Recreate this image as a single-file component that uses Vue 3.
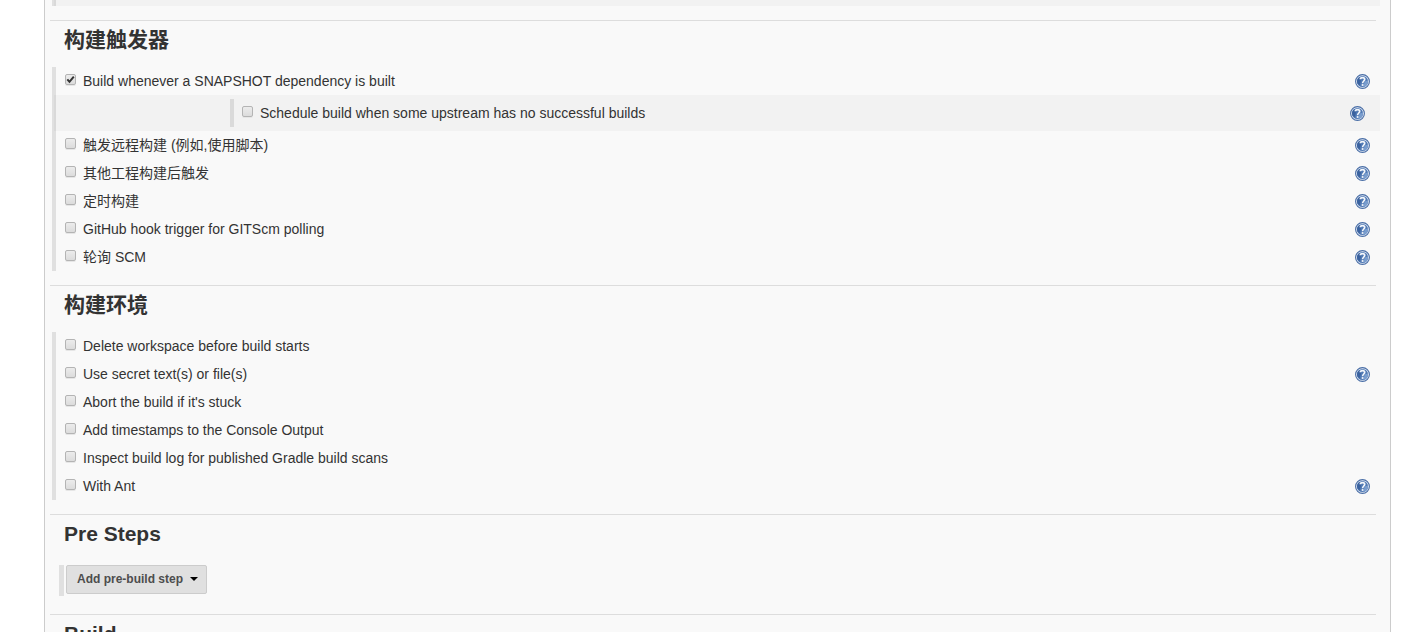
<script setup>
const sections = [
  {
    id: 'triggers',
    title: '构建触发器',
    rows: [
      { label: 'Build whenever a SNAPSHOT dependency is built', checked: true, help: true },
      { label: 'Schedule build when some upstream has no successful builds', nested: true, help: true },
      { label: '触发远程构建 (例如,使用脚本)', help: true },
      { label: '其他工程构建后触发', help: true },
      { label: '定时构建', help: true },
      { label: 'GitHub hook trigger for GITScm polling', help: true },
      { label: '轮询 SCM', help: true }
    ]
  },
  {
    id: 'environment',
    title: '构建环境',
    rows: [
      { label: 'Delete workspace before build starts' },
      { label: 'Use secret text(s) or file(s)', help: true },
      { label: "Abort the build if it's stuck" },
      { label: 'Add timestamps to the Console Output' },
      { label: 'Inspect build log for published Gradle build scans' },
      { label: 'With Ant', help: true }
    ]
  }
]
</script>

<template>
  <main class="page">
    <form class="panel" @submit.prevent>
      <div class="options previous"><div class="nested-tail"></div></div>

      <section v-for="section in sections" :key="section.id" class="section">
        <h2 class="title">{{ section.title }}</h2>
        <div class="options">
          <div
            v-for="(row, i) in section.rows"
            :key="i"
            class="row"
            :class="{ nested: row.nested }"
          >
            <div class="choice">
              <input :id="section.id + i" class="box" type="checkbox" :checked="row.checked" />
              <label :for="section.id + i">{{ row.label }}</label>
            </div>
            <a v-if="row.help" class="help" href="#" :aria-label="'Help: ' + row.label">
              <svg viewBox="0 0 16 16" width="16" height="16" aria-hidden="true">
                <circle cx="7.5" cy="8.5" r="6.9" fill="#e4ebf5" stroke="#4a6ea6" stroke-width="1.1" />
                <circle cx="7.5" cy="8.5" r="5.5" fill="#5079b4" />
                <path d="M2.5 10.5A5.5 5.5 0 0 1 4.5 3.9L6 7.5 4.5 12.5Z" fill="#3a629f" />
                <path d="M8.5 13.9A5.5 5.5 0 0 0 13 7.5L9.5 8.5Z" fill="#799dce" />
                <path
                  d="M5.3 6.3C5.3 4 9.7 4 9.7 6.3 9.7 8 7.6 8.1 7.6 10.3"
                  fill="none"
                  stroke="#f4f7fb"
                  stroke-width="1.7"
                />
                <rect x="6.7" y="11.1" width="1.8" height="1.8" fill="#f4f7fb" />
              </svg>
            </a>
          </div>
        </div>
      </section>

      <section class="section">
        <h2 class="title">Pre Steps</h2>
        <div class="steps">
          <button class="add" type="button">
            Add pre-build step
            <svg viewBox="0 0 8 4" width="8" height="4" aria-hidden="true">
              <path d="M0 0H8L4 4Z" fill="#000" />
            </svg>
          </button>
        </div>
      </section>

      <section class="section">
        <h2 class="title">Build</h2>
      </section>
    </form>
  </main>
</template>

<style>
body {
  margin: 0;
  background: #fff;
}
</style>

<style scoped>
.page {
  box-sizing: border-box;
  height: 100vh;
  overflow: hidden;
  padding: 0 36px 0 44px;
  color: #333;
  font: 14px/20px "Liberation Sans", Arial, "Noto Sans CJK SC", sans-serif;
}
.panel {
  box-sizing: border-box;
  min-height: 100vh;
  padding: 0 10px 0 7px;
  border: solid #ccc;
  border-width: 0 1px;
  background: #f9f9f9;
}
.options {
  border-left: 4px solid #e0e0e0;
}
.previous {
  margin-bottom: 14px;
}
.nested-tail {
  height: 6px;
  margin-left: -2px;
  background: rgba(0, 0, 0, 0.027);
}
.section {
  position: relative;
  margin-bottom: 14px;
  padding-top: 1px;
}
.section::before {
  content: "";
  position: absolute;
  top: 0;
  left: -2px;
  right: 4px;
  height: 1px;
  background: #ddd;
}
.title {
  margin: 0 0 12px 12px;
  padding-top: 4px;
  font-size: 21px;
  line-height: 30px;
  font-weight: bold;
}
.row {
  display: flex;
  align-items: center;
  justify-content: space-between;
  height: 28px;
  padding: 0 9px;
}
.choice {
  display: flex;
  align-items: center;
  height: 28px;
}
.nested {
  height: 36px;
  margin-left: -2px;
  padding: 0 14px 0 176px;
  background: rgba(0, 0, 0, 0.027);
}
.nested .choice {
  padding-left: 8px;
  border-left: 4px solid #dadada;
}
.box {
  appearance: none;
  box-sizing: border-box;
  width: 11px;
  height: 11px;
  margin: 0 7px 4px 0;
  border: 1px solid #b4b4b4;
  border-radius: 2px;
  background: linear-gradient(#ececec, #dcdcdc);
  box-shadow: 0 1px 0 #e6e6e6;
}
.box:checked {
  background:
    url("data:image/svg+xml,%3Csvg xmlns='http://www.w3.org/2000/svg' viewBox='0 0 9 9'%3E%3Cpath d='M1.3 4.3 3.5 6.8 7.8 1.6' fill='none' stroke='%23333' stroke-width='2'/%3E%3C/svg%3E")
      center / 9px 9px no-repeat,
    linear-gradient(#ececec, #dcdcdc);
}
.help {
  display: block;
  width: 16px;
  height: 16px;
}
.help svg {
  display: block;
}
.steps {
  display: flex;
  margin: 16px 0 18px 7px;
  padding: 0 0 2px 2px;
  border-left: 5px solid #e0e0e0;
}
.add {
  display: flex;
  align-items: center;
  gap: 7px;
  height: 29px;
  padding: 0 8px 1px 10px;
  border: 1px solid #ccc;
  border-radius: 2px;
  background: #e0e0e0;
  color: #4d4d4d;
  font: bold 12px/16px "Liberation Sans", Arial, sans-serif;
}
</style>
